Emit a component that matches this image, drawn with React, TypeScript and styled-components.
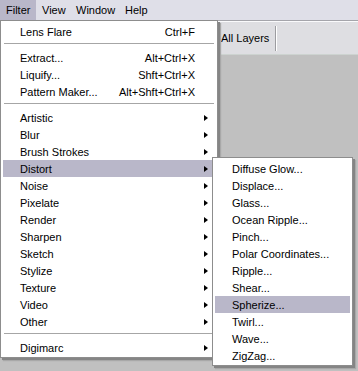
import React from "react";
import styled, { createGlobalStyle } from "styled-components";

const Global = createGlobalStyle`
  html, body { margin: 0; padding: 0; }
  body {
    width: 358px;
    height: 371px;
    overflow: hidden;
    background: #c0c0c0;
    font-family: "Liberation Sans", Arial, sans-serif;
    font-size: 11px;
    color: #000;
  }
`;

const Window = styled.div`
  position: relative;
  width: 358px;
  height: 371px;
  display: flex;
  flex-direction: column;
  background: #c0c0c0;
`;

const MenuBar = styled.div`
  display: flex;
  height: 20px;
  background: #dfdfe8;
  border-bottom: 1px solid #a5a5ab;
`;

const BarItem = styled.div<{ $active?: boolean; $w?: number }>`
  display: flex;
  align-items: center;
  box-sizing: border-box;
  width: ${(p) => (p.$w ? `${p.$w}px` : "auto")};
  white-space: nowrap;
  padding: 0 6px;
  background: ${(p) => (p.$active ? "#b9b7c9" : "transparent")};
`;

const Toolbar = styled.div`
  display: flex;
  align-items: center;
  height: 32px;
  padding-left: 221px;
  background: #dedee2;
  border-top: 1px solid #fafafc;
  border-bottom: 1px solid #cdd3d0;
`;

const ToolLabel = styled.span`
  width: 54px;
`;

const ToolSep = styled.div`
  width: 1px;
  height: 25px;
  background: #9c9ca0;
  border-right: 1px solid #ffffff;
`;

const Canvas = styled.div`
  flex: 1;
  background: #c0c0c0;
`;

const Menu = styled.div<{ $left: number; $top: number; $width: number }>`
  position: absolute;
  left: ${(p) => p.$left}px;
  top: ${(p) => p.$top}px;
  width: ${(p) => p.$width}px;
  box-sizing: border-box;
  background: #ffffff;
  border: 1px solid #8d8d8d;
  padding: 2px 2px 1px;
  box-shadow: 2px 2px 0 #858585, 3px 3px 1px #a8a8a8;
  display: flex;
  flex-direction: column;
`;

const Item = styled.div<{ $active?: boolean }>`
  display: grid;
  grid-template-columns: 1fr auto 20px;
  align-items: center;
  height: 17px;
  padding-left: 17px;
  background: ${(p) => (p.$active ? "#b9b7c9" : "transparent")};
  white-space: nowrap;
`;

const Shortcut = styled.span`
  text-align: right;
`;

const Arrow = styled.span`
  justify-self: end;
  margin-right: 7px;
  width: 0;
  height: 0;
  border-top: 3.5px solid transparent;
  border-bottom: 3.5px solid transparent;
  border-left: 4px solid #000;
`;

const Separator = styled.div`
  height: 9px;
  padding-top: 3px;
  box-sizing: border-box;
  &::after {
    content: "";
    display: block;
    height: 1px;
    margin: 0 1px;
    background: #a6a6a6;
  }
`;

type Entry =
  | { sep: true }
  | { label: string; shortcut?: string; sub?: boolean; active?: boolean };

const filterItems: Entry[] = [
  { label: "Lens Flare", shortcut: "Ctrl+F" },
  { sep: true },
  { label: "Extract...", shortcut: "Alt+Ctrl+X" },
  { label: "Liquify...", shortcut: "Shft+Ctrl+X" },
  { label: "Pattern Maker...", shortcut: "Alt+Shft+Ctrl+X" },
  { sep: true },
  { label: "Artistic", sub: true },
  { label: "Blur", sub: true },
  { label: "Brush Strokes", sub: true },
  { label: "Distort", sub: true, active: true },
  { label: "Noise", sub: true },
  { label: "Pixelate", sub: true },
  { label: "Render", sub: true },
  { label: "Sharpen", sub: true },
  { label: "Sketch", sub: true },
  { label: "Stylize", sub: true },
  { label: "Texture", sub: true },
  { label: "Video", sub: true },
  { label: "Other", sub: true },
  { sep: true },
  { label: "Digimarc", sub: true },
];

const distortItems: Entry[] = [
  { label: "Diffuse Glow..." },
  { label: "Displace..." },
  { label: "Glass..." },
  { label: "Ocean Ripple..." },
  { label: "Pinch..." },
  { label: "Polar Coordinates..." },
  { label: "Ripple..." },
  { label: "Shear..." },
  { label: "Spherize...", active: true },
  { label: "Twirl..." },
  { label: "Wave..." },
  { label: "ZigZag..." },
];

function renderEntries(entries: Entry[]) {
  return entries.map((e, i) =>
    "sep" in e ? (
      <Separator key={i} />
    ) : (
      <Item key={i} $active={e.active}>
        <span>{e.label}</span>
        <Shortcut>{e.shortcut ?? ""}</Shortcut>
        {e.sub ? <Arrow /> : <span />}
      </Item>
    )
  );
}

export default function App() {
  return (
    <>
      <Global />
      <Window>
        <MenuBar>
          <BarItem $active $w={36}>Filter</BarItem>
          <BarItem $w={34}>View</BarItem>
          <BarItem $w={49}>Window</BarItem>
          <BarItem>Help</BarItem>
        </MenuBar>
        <Toolbar>
          <ToolLabel>All Layers</ToolLabel>
          <ToolSep />
        </Toolbar>
        <Canvas />
        <Menu $left={0} $top={20} $width={218}>
          {renderEntries(filterItems)}
        </Menu>
        <Menu $left={212} $top={157} $width={141}>
          {renderEntries(distortItems)}
        </Menu>
      </Window>
    </>
  );
}
